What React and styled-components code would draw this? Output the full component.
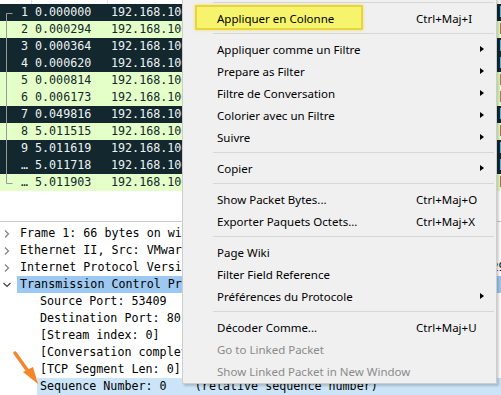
import React from 'react';
import styled, { createGlobalStyle } from 'styled-components';

const GlobalStyle = createGlobalStyle`
  html, body {
    margin: 0;
    padding: 0;
    background: #ffffff;
  }
`;

const Screen = styled.div`
  position: relative;
  width: 501px;
  height: 395px;
  overflow: hidden;
  background: #ffffff;
  font-family: "DejaVu Sans Mono", "Liberation Mono", monospace;
  font-size: 11.7px;
`;

const PacketPane = styled.div`
  position: relative;
  height: 221px;
  background: #ffffff;
`;

const HeaderStrip = styled.div`
  display: grid;
  grid-template-columns: 32px 76px 1fr;
  height: 4px;
  border-bottom: 0;

  span {
    border-right: 1px solid #e3e3e3;
  }
`;

const PacketRow = styled.div`
  display: grid;
  grid-template-columns: 32px 76px 140px 120px 1fr;
  height: 17px;
  line-height: 17px;
  white-space: nowrap;
  overflow: hidden;
  background: ${p => (p.$dark ? '#12272e' : '#e4ffc7')};
  color: ${p => (p.$dark ? '#eef3f3' : '#12272e')};
`;

const NumCell = styled.span`
  text-align: right;
  padding-right: 4px;
`;

const Cell = styled.span`
  padding-left: 3px;
  overflow: hidden;
`;

const Bracket = styled.svg`
  position: absolute;
  left: 0;
  top: 0;
`;

const Splitter = styled.div`
  height: 1px;
  background: #c8c8c8;
`;

const TreePane = styled.div`
  padding-top: 3px;
  display: flex;
  flex-direction: column;
  color: #000000;
`;

const TreeRow = styled.div`
  display: flex;
  height: 17px;
  line-height: 17px;
  white-space: nowrap;
`;

const Toggle = styled.span`
  flex: 0 0 ${p => p.$indent}px;
  display: flex;
  align-items: center;
  justify-content: flex-start;
  padding-left: 3px;
  box-sizing: border-box;
`;

const TreeLabel = styled.span`
  flex: 1;
  padding-left: 3px;
  background: ${p => p.$bg || 'transparent'};
  white-space: pre;
`;

const Arrow = styled.svg`
  position: absolute;
  left: 0;
  top: 340px;
`;

const Menu = styled.div`
  position: absolute;
  left: 182px;
  top: -2px;
  width: 315px;
  box-sizing: border-box;
  padding-bottom: 1px;
  background: #f0f0f0;
  border: 1px solid #cdcdcd;
  border-top: 0;
  box-shadow: 2px 2px 2px rgba(0, 0, 0, 0.18);
  font-family: "Noto Sans", "Open Sans", sans-serif;
  font-size: 11.5px;
  color: #000000;
`;

const Separator = styled.div`
  height: 9px;
  display: flex;
  align-items: center;
  padding-left: 30px;
  padding-right: 2px;

  &::after {
    content: '';
    flex: 1;
    height: 1px;
    background: #d7d7d7;
  }
`;

const MenuItem = styled.div`
  position: relative;
  display: grid;
  grid-template-columns: 199px 62px 1fr;
  align-items: center;
  height: 22px;
  padding-left: 34px;
  color: ${p => (p.$disabled ? '#8a8a8a' : '#000000')};
`;

const ItemText = styled.span`
  position: relative;
  z-index: 1;
  white-space: nowrap;
`;

const Shortcut = styled.span`
  white-space: nowrap;
`;

const SubArrow = styled.span`
  width: 0;
  height: 0;
  margin-left: 2px;
  border-left: 4px solid #000000;
  border-top: 3.5px solid transparent;
  border-bottom: 3.5px solid transparent;
`;

const Annotation = styled.span`
  position: absolute;
  left: 12px;
  top: -2px;
  width: 168px;
  height: 25px;
  box-sizing: border-box;
  background: #f6f36c;
  border: 2px solid #ead43c;
  box-shadow: 0 0 3px rgba(236, 214, 60, 0.7);
`;

const packets = [
  ['1', '0.000000', true],
  ['2', '0.000294', false],
  ['3', '0.000364', true],
  ['4', '0.000620', true],
  ['5', '0.000814', false],
  ['6', '0.006173', false],
  ['7', '0.049816', true],
  ['8', '5.011515', false],
  ['9', '5.011619', true],
  ['…', '5.011718', true],
  ['…', '5.011903', false],
];

const tree = [
  { open: false, text: 'Frame 1: 66 bytes on wire (528 bits), 66 bytes captured' },
  { open: false, text: 'Ethernet II, Src: VMware_c0:00:08, Dst: VMware_e1:9a:4c' },
  { open: false, text: 'Internet Protocol Version 4, Src: 192.168.100.1, Dst: 192.168.100.129' },
  { open: true, text: 'Transmission Control Protocol, Src Port: 53409, Dst Port: 80', bg: '#9cc8f1' },
  { child: true, text: 'Source Port: 53409' },
  { child: true, text: 'Destination Port: 80' },
  { child: true, text: '[Stream index: 0]' },
  { child: true, text: '[Conversation completeness: Complete, WITH_DATA (31)]' },
  { child: true, text: '[TCP Segment Len: 0]' },
  { child: true, text: 'Sequence Number: 0    (relative sequence number)', bg: '#cce4f7' },
];

const menu = [
  { sep: true },
  { label: 'Appliquer en Colonne', key: 'Ctrl+Maj+I', mark: true },
  { sep: true },
  { label: 'Appliquer comme un Filtre', sub: true },
  { label: 'Prepare as Filter', sub: true },
  { label: 'Filtre de Conversation', sub: true },
  { label: 'Colorier avec un Filtre', sub: true },
  { label: 'Suivre', sub: true },
  { sep: true },
  { label: 'Copier', sub: true },
  { sep: true },
  { label: 'Show Packet Bytes...', key: 'Ctrl+Maj+O' },
  { label: 'Exporter Paquets Octets...', key: 'Ctrl+Maj+X' },
  { sep: true },
  { label: 'Page Wiki' },
  { label: 'Filter Field Reference' },
  { label: 'Préférences du Protocole', sub: true },
  { sep: true },
  { label: 'Décoder Comme...', key: 'Ctrl+Maj+U' },
  { label: 'Go to Linked Packet', disabled: true },
  { label: 'Show Linked Packet in New Window', disabled: true },
];

const Chevron = ({ open }) => (
  <svg width="8" height="8" viewBox="0 0 8 8">
    {open ? (
      <path d="M0.5 2 L4 5.5 L7.5 2" fill="none" stroke="#404040" strokeWidth="1.2" />
    ) : (
      <path d="M2 0.5 L5.5 4 L2 7.5" fill="none" stroke="#808080" strokeWidth="1.2" />
    )}
  </svg>
);

const App = () => (
  <>
    <GlobalStyle />
    <Screen>
      <PacketPane>
        <HeaderStrip>
          <span />
          <span />
          <span />
        </HeaderStrip>
        {packets.map(([no, time, dark], i) => (
          <PacketRow key={i} $dark={dark}>
            <NumCell>{no}</NumCell>
            <Cell>{time}</Cell>
            <Cell>{i % 2 ? '192.168.100.1' : '192.168.100.129'}</Cell>
            <Cell>{i % 2 ? '192.168.100.129' : '192.168.100.1'}</Cell>
            <Cell>TCP 66 53409 → 80 [SYN] Seq=0 Win=8192</Cell>
          </PacketRow>
        ))}
        <Bracket width="20" height="200">
          <path d="M12.5 13.5 H6.5 V183.5 H12.5" fill="none" stroke="#9a9a9a" strokeWidth="1" />
        </Bracket>
      </PacketPane>
      <Splitter />
      <TreePane>
        {tree.map((row, i) => (
          <TreeRow key={i}>
            <Toggle $indent={row.child ? 37 : 17}>
              {!row.child && <Chevron open={row.open} />}
            </Toggle>
            <TreeLabel $bg={row.bg}>{row.text}</TreeLabel>
          </TreeRow>
        ))}
      </TreePane>
      <Arrow width="50" height="55" viewBox="0 0 50 55">
        <path d="M15 13 L30 34" stroke="#f5852b" strokeWidth="3.5" strokeLinecap="round" />
        <path d="M23 32 L33 27 L38 44 Z" fill="#f5852b" />
      </Arrow>
      <Menu>
        {menu.map((m, i) =>
          m.sep ? (
            <Separator key={i} />
          ) : (
            <MenuItem key={i} $disabled={m.disabled}>
              {m.mark && <Annotation />}
              <ItemText>{m.label}</ItemText>
              <Shortcut>{m.key || ''}</Shortcut>
              {m.sub ? <SubArrow /> : <span />}
            </MenuItem>
          )
        )}
      </Menu>
    </Screen>
  </>
);

export default App;
